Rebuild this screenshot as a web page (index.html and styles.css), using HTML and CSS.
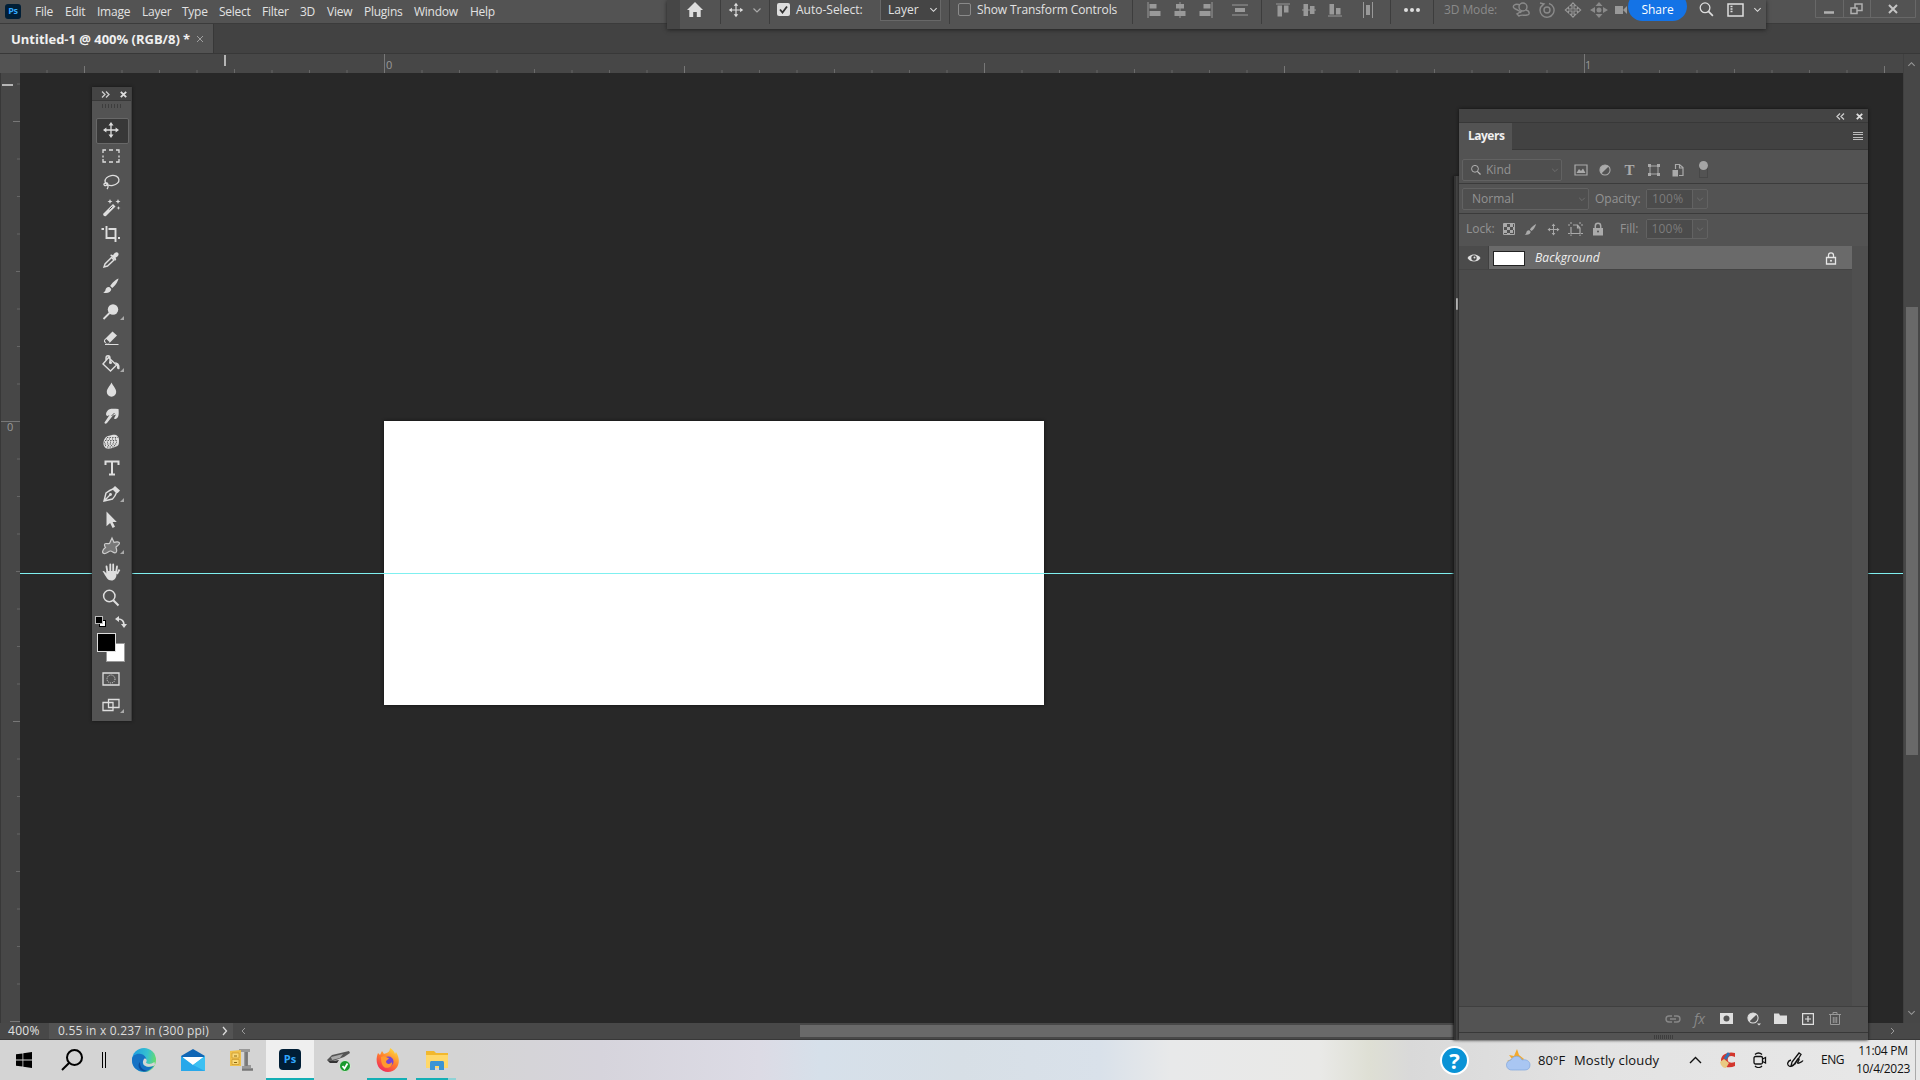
FILE: index.html
```html
<!DOCTYPE html>
<html lang="en">
<head>
    <meta charset="UTF-8">
    <title>Untitled-1 @ 400% (RGB/8)</title>
    <link rel="stylesheet" href="styles.css">
</head>
<body>
    <!-- shared icons -->
    <svg class="defs">
        <symbol id="move" viewBox="0 0 20 20"><path d="M10 4v12M4 10h12" stroke="currentColor" stroke-width="1.3"/><path d="M10 2l2.5 3.4h-5zM10 18l2.5-3.4h-5zM2 10l3.4-2.5v5zM18 10l-3.4-2.5v5z" fill="currentColor"/></symbol>
        <symbol id="brush" viewBox="0 0 20 20"><path d="M17.5 2.5c-3 1-7 5-8.3 7.5l2 2c2.500-1.600 5.500-5.800 6.300-9.500zM8.300 11c-2.500-.3-3.600 1.500-3.900 3.200-.2 1.200-.9 1.700-2.200 2.300 3.300 1.300 7.800.3 8.100-3.500z" fill="currentColor"/></symbol>
        <symbol id="chev" viewBox="0 0 10 10"><path d="M1.500 3.500L5 7l3.500-3.500" fill="none" stroke="currentColor" stroke-width="1.200"/></symbol>
        <symbol id="circle-half" viewBox="0 0 16 16"><circle cx="8" cy="8" r="5.800" fill="none" stroke="currentColor" stroke-width="1.200"/><path d="M12.100 3.900A5.800 5.800 0 0 0 3.900 12.100z" fill="currentColor"/></symbol>
        <symbol id="glass" viewBox="0 0 20 20"><circle cx="8.300" cy="8" r="5.700" fill="none" stroke="currentColor" stroke-width="1.500"/><path d="M12.300 12.300L17.500 17.500" stroke="currentColor" stroke-width="2"/></symbol>
        <symbol id="x" viewBox="0 0 10 10"><path d="M2 2l6 6M8 2L2 8" stroke="currentColor" stroke-width="2"/></symbol>
    </svg>

    <div class="menubar">
        <span class="ps-logo">Ps</span>
        <span>File</span><span>Edit</span><span>Image</span><span>Layer</span><span>Type</span><span>Select</span><span>Filter</span><span>3D</span><span>View</span><span>Plugins</span><span>Window</span><span>Help</span>
        <div class="win-controls">
            <svg width="101" height="18" viewBox="0 0 101 18"><path d="M.5 0v17.500h100V0M28.500 0v17M55.500 0v17" fill="none" stroke="#686868"/><path d="M9 12.500h10" stroke="#b0b0b0" stroke-width="2.500"/><path d="M36 8h6v5.500h-6zM40 8V4h7v6.500h-5" fill="none" stroke="#b0b0b0" stroke-width="1.500"/><path d="M74 5l8 8M82 5l-8 8" stroke="#c4c4c4" stroke-width="2"/></svg>
        </div>
    </div>

    <div class="tabbar">
        <div class="tab"><b>Untitled-1 @ 400% (RGB/8) *</b><svg width="8" height="8" viewBox="0 0 8 8"><path d="M1 1l6 6M7 1L1 7" stroke="#a0a0a0"/></svg></div>
    </div>

    <div class="work">
        <div class="corner"></div>
        <div class="ruler-h"><span class="n0">0</span><span class="n1">1</span><i class="mark-h"></i></div>
        <div class="ruler-v"><span>0</span><i class="mark-v"></i></div>
        <div class="stage">
            <div class="doc"></div>
            <div class="guide"></div>
        </div>
        <div class="vscroll">
            <svg class="up" width="9" height="9"><use href="#chev"/></svg>
            <div class="vthumb"></div>
            <svg width="9" height="9"><use href="#chev"/></svg>
        </div>
    </div>

    <div class="statusbar">
        <span class="zoom">400%</span>
        <span class="docsize">0.55 in x 0.237 in (300 ppi)<svg width="6" height="10" viewBox="0 0 6 10"><path d="M1 1l3.500 4L1 9" fill="none" stroke="#ddd" stroke-width="1.300"/></svg></span>
        <svg class="left" width="6" height="8" viewBox="0 0 6 8"><path d="M5 1L2 4l3 3" fill="none" stroke="#999"/></svg>
        <div class="hthumb"></div>
        <svg class="right" width="6" height="8" viewBox="0 0 6 8"><path d="M1 1l3 3-3 3" fill="none" stroke="#999"/></svg>
    </div>

    <!-- floating options bar -->
    <div class="options">
        <div class="grip"></div>
        <div class="cell home"><svg width="18" height="18" viewBox="0 0 18 18"><path d="M9 1l8 8h-2.300v7H10.800v-5H7.200v5H3.300V9H1z" fill="#dedede"/></svg></div>
        <div class="cell tool"><svg width="18" height="18"><use href="#move"/></svg><svg class="dim" width="10" height="10"><use href="#chev"/></svg></div>
        <div class="cell auto">
            <svg width="13" height="13" viewBox="0 0 13 13"><rect width="13" height="13" rx="2" fill="#dedede"/><path d="M3 6.500l2.500 3L10 3.500" fill="none" stroke="#333" stroke-width="1.800"/></svg>
            <span class="t-auto">Auto-Select:</span>
            <span class="select">Layer<svg width="9" height="9"><use href="#chev"/></svg></span>
        </div>
        <div class="cell show"><i class="box"></i><span>Show Transform Controls</span></div>
        <div class="cell aligns">
            <svg width="14" height="16" viewBox="0 0 14 16"><path d="M1 0v16" stroke="#999"/><path d="M2.500 2h7v4.500h-7zM2.500 9h11v5h-11z" fill="#999"/></svg>
            <svg width="14" height="16" viewBox="0 0 14 16"><path d="M7 0v16" stroke="#999"/><path d="M3 2h8v4.500H3zM1.500 9h11v5h-11z" fill="#999"/></svg>
            <svg width="14" height="16" viewBox="0 0 14 16"><path d="M13 0v16" stroke="#999"/><path d="M4.500 2h7v4.500h-7zM.5 9h11v5H.5z" fill="#999"/></svg>
            <svg class="dist" width="16" height="12" viewBox="0 0 16 12"><path d="M0 1h16M0 11h16" stroke="#999"/><path d="M3 4h10v4H3z" fill="#999"/></svg>
        </div>
        <div class="cell aligns b">
            <svg width="14" height="14" viewBox="0 0 14 14"><path d="M0 1h14" stroke="#999"/><path d="M1.500 2.500h4.500v11H1.500zM8 2.500h4.500v7H8z" fill="#999"/></svg>
            <svg width="14" height="14" viewBox="0 0 14 14"><path d="M0 7h14" stroke="#999"/><path d="M1.500 1h4.500v12H1.500zM8 3h4.500v8H8z" fill="#999"/></svg>
            <svg width="14" height="14" viewBox="0 0 14 14"><path d="M0 13h14" stroke="#999"/><path d="M1.500 1h4.500v10.500H1.500zM8 5h4.500v6.500H8z" fill="#999"/></svg>
            <svg class="dist" width="10" height="16" viewBox="0 0 10 16"><path d="M.5 0v16M9.500 0v16" stroke="#999"/><path d="M3 3h4v10H3z" fill="#999"/></svg>
        </div>
        <div class="cell dots"><svg width="18" height="6" viewBox="0 0 18 6"><g fill="#dedede"><circle cx="3" cy="3" r="2"/><circle cx="9" cy="3" r="2"/><circle cx="15" cy="3" r="2"/></g></svg></div>
        <div class="cell mode">
            <span>3D Mode:</span>
            <svg width="18" height="16" viewBox="0 0 18 16" fill="none" stroke="#8a8a8a" stroke-width="1.400"><circle cx="11" cy="5" r="4"/><path d="M8 3C3 1 0 4 2 6s6 2 7 5M14 8c4 1 4 5 1 5-3 1-5-1-8 1l-2-2 5-3"/></svg>
            <svg width="18" height="16" viewBox="0 0 18 16" fill="none" stroke="#8a8a8a" stroke-width="1.400"><circle cx="9" cy="8" r="3"/><path d="M5 2.500A7 7 0 1 0 11 1.500M2 1l4 1-3 3"/></svg>
            <svg width="18" height="16" viewBox="0 0 18 16" fill="none" stroke="#999" stroke-width="1.100"><path d="M9 .8l2.800 3H10V7h3.500V5.200L16.700 8l-3.200 2.800V9H10v3.200h1.800l-2.800 3-2.800-3H8V9H4.500v1.800L1.300 8l3.200-2.800V7H8V3.800H6.200z"/></svg>
            <svg width="18" height="16" viewBox="0 0 18 16" fill="#8a8a8a"><circle cx="9" cy="8" r="2.500"/><path d="M9 0l3.500 4h-7zM9 16l3.500-4h-7zM0 8l5-3v6zM18 8l-5-3v6z"/></svg>
            <svg class="cam" width="12" height="10" viewBox="0 0 12 10" fill="#999"><path d="M0 1h8v8H0zM8 5l4-4v8z"/></svg>
        </div>
        <div class="share">Share</div>
        <svg class="o-search" width="17" height="17"><use href="#glass"/></svg>
        <svg class="o-ws" width="17" height="14" viewBox="0 0 17 14"><path d="M1 1h15v12H1z" fill="none" stroke="#dedede" stroke-width="1.500"/><path d="M3.500 3.500h2M3.500 6h2M3.500 8.500h2" stroke="#dedede" stroke-width="1.500"/></svg>
        <svg class="o-chev" width="9" height="9"><use href="#chev"/></svg>
    </div>

    <!-- floating tools panel -->
    <div class="tools">
        <div class="tools-head"><svg width="9" height="7" viewBox="0 0 9 7"><path d="M1 .5l3 3-3 3M5 .5l3 3-3 3" fill="none" stroke="#ccc" stroke-width="1.300"/></svg><svg width="9" height="9"><use href="#x"/></svg></div>
        <div class="tools-grip"></div>
        <div class="tool-item active"><svg><use href="#move"/></svg></div>
        <div class="tool-item"><svg viewBox="0 0 20 20"><path d="M2 7V4h3M8 4h4M15 4h3v3M18 9.500v2M18 13v3h-3M12 16H8M5 16H2v-3M2 11.500v-2" fill="none" stroke="#dedede" stroke-width="1.300"/></svg></div>
        <div class="tool-item"><svg viewBox="0 0 20 20" fill="none" stroke="#dedede" stroke-width="1.300"><ellipse cx="11" cy="8.500" rx="7" ry="5" transform="rotate(-10 11 8.500)"/><path d="M5 11c-3 0-2.500 3 0 2.500S7 10.500 5 11M6.500 13c1 1 .5 3-.5 4"/></svg></div>
        <div class="tool-item"><svg viewBox="0 0 20 20" fill="#dedede"><path d="M2.500 15.500L12 6l2.500 2.500-9.500 9.500c-1.500 1-3.800-1-2.500-2.500z"/><path d="M11.500 8.500l-3 3" stroke="#535353"/><path d="M9 1l.7 1.800 1.800.7-1.800.7L9 6l-.7-1.800-1.800-.7 1.800-.7zM17 1l.7 1.800 1.800.7-1.800.7L17 6l-.7-1.800-1.800-.7 1.800-.7zM17.500 8l.5 1.500 1.500.5-1.500.5-.5 1.500-.5-1.500-1.500-.5 1.500-.5z"/></svg></div>
        <div class="tool-item"><svg viewBox="0 0 20 20" fill="none" stroke="#dedede" stroke-width="1.900"><path d="M5.500 2v12h9.500M7.500 5h7v13M.5 5h2.500M17 14h2"/></svg></div>
        <div class="tool-item"><svg viewBox="0 0 20 20"><path d="M3 17l1-3 6.500-6.500 2.500 2.500L6.500 16z" fill="none" stroke="#dedede" stroke-width="1.400"/><path d="M9 5l1.500-.5 1.500.8c1.500-2.500 3.500-4 5-2.500s0 3.500-2.500 5l.8 1.500-1 1.500z" fill="#dedede"/></svg></div>
        <div class="tool-item"><svg><use href="#brush"/></svg></div>
        <div class="tool-item more"><svg viewBox="0 0 20 20"><circle cx="12" cy="7.500" r="5.200" fill="#dedede"/><path d="M8.500 11L2.500 17" stroke="#dedede" stroke-width="1.800"/></svg></div>
        <div class="tool-item"><svg viewBox="0 0 20 20"><path d="M3 12L11.500 3.500l4.500 4-8.500 8.500H5.500L3 14z" fill="#dedede"/><path d="M3.800 12.500l1.500-1.500 3.500 3.200-1.500 1.500H5.500z" fill="#535353"/><path d="M4 16.500h13.500" stroke="#dedede"/></svg></div>
        <div class="tool-item more"><svg viewBox="0 0 20 20"><path d="M7.500 3.500l8 7.500-6 6L2 10zM9 9V4c0-3-4-3-4 0v2" fill="none" stroke="#dedede" stroke-width="1.400"/><circle cx="9.500" cy="8.500" r="1.500" fill="#dedede"/><path d="M14 8c4 1 5 3 4.500 7-2 1-3-1-2.500-3z" fill="#dedede"/></svg></div>
        <div class="tool-item"><svg viewBox="0 0 20 20"><path d="M10.500 2.500c1.500 3.500 4.700 6 4.700 9.500a4.700 4.700 0 0 1-9.400 0c0-3.500 3.200-6 4.700-9.500z" fill="#dedede"/></svg></div>
        <div class="tool-item"><svg viewBox="0 0 20 20"><path d="M6 5.500C8 2 12 3 17.500 3c.5 5 .5 9-3 10-2 .5-1.500-1-.5-2.500l1-2-3 1L6 17c-1 1-2.800 1-2.500-.5L8.500 9 6.500 10c-2-.5-1.700-3-.5-4.500z" fill="#dedede"/><path d="M10.500 10l3-3" stroke="#535353"/></svg></div>
        <div class="tool-item"><svg viewBox="0 0 20 20"><path d="M3 8c2-5 6-4 8-5 4-1 7 1 7 5s0 6-4 7c-5 2-9 3-11-1-1-2-.5-4 0-6z" fill="#dedede"/><path d="M4 8.500h13M3.500 12h13M6 5.500h11M6 15h8" stroke="#585858" stroke-width="1.200" stroke-dasharray="1.300 1.300"/><path d="M5 7h12M3 10.200h14M4 13.600h11" stroke="#585858" stroke-width="1" stroke-dasharray="1 2"/></svg></div>
        <div class="tool-item"><svg viewBox="0 0 20 20"><path d="M4.500 7V3.500h13V7M11 3.500v13M8 16.500h6" fill="none" stroke="#dedede" stroke-width="2"/></svg></div>
        <div class="tool-item more"><svg viewBox="0 0 20 20"><path d="M3 17l2-8c2-1.500 4-3 7-4l3.500 3.500c-1 3-2.500 5-4 6.500zM3 17l6-6" fill="none" stroke="#dedede" stroke-width="1.400"/><circle cx="9.500" cy="10.500" r="1.400" fill="#dedede"/><path d="M11.500 4.500L14 2l5 4.500-2.500 2.700z" fill="#dedede"/></svg></div>
        <div class="tool-item"><svg viewBox="0 0 20 20"><path d="M5.500 1.500v14.800l3.600-3.400 2.500 5 2.400-1.200-2.400-4.800h4.200z" fill="#dedede"/></svg></div>
        <div class="tool-item more"><svg viewBox="0 0 20 20"><path d="M11 2l2 4.500c2-1 5-1 5.500.5s-2 2.500-3.500 4c0 2 2 4 0 5.500s-3.500-1.500-5.500-1.500-4 3-6.500 2.500-1.500-4 1.500-6c-1.500-2-1.500-4 .5-4s2 .5 3.500 0z" fill="#777" stroke="#ccc" stroke-width="1.200"/></svg></div>
        <div class="tool-item"><svg viewBox="0 0 20 20"><path d="M6.500 11L5.500 4.500M9.300 10V2.500M12.200 10V2.500M15 11l1-6.500" stroke="#dedede" stroke-width="1.800" stroke-linecap="round"/><path d="M1.500 9c1.500-.5 3 1 4 2.500V9h10v3c0 4-2 6.500-5 6.500-4 0-5-3-9-9.500z" fill="#dedede"/><path d="M16 12l2.500-4.500" stroke="#dedede" stroke-width="1.800"/></svg></div>
        <div class="tool-item"><svg><use href="#glass"/></svg></div>
        <div class="swatch-minis">
            <svg width="12" height="12" viewBox="0 0 12 12"><rect x="4.500" y="4.500" width="6" height="6" fill="#fff" stroke="#000"/><rect x=".5" y=".5" width="7" height="7" fill="#000" stroke="#bbb"/></svg>
            <svg width="12" height="12" viewBox="0 0 12 12"><path d="M3 3c4 0 6 1.500 6 6" fill="none" stroke="#dedede" stroke-width="1.700"/><path d="M0 3l4-3v6zM9 12l-3-4h6z" fill="#dedede"/></svg>
        </div>
        <div class="swatches"><i class="bg"></i><i class="fg"></i></div>
        <div class="tool-item mask"><svg viewBox="0 0 20 20" fill="none" stroke="#dedede"><path d="M2 4h16v12H2z" stroke-width="1.300"/><circle cx="10" cy="10" r="4" stroke-dasharray="1 1"/></svg></div>
        <div class="tool-item more"><svg viewBox="0 0 20 20" fill="#535353" stroke="#dedede" stroke-width="1.300"><path d="M2 7.500h10v8H2zM7.500 4.500H18v8H7.500z"/></svg></div>
    </div>

    <!-- collapsed panel peeking out from behind the layers panel -->
    <div class="behind"></div>

    <div class="layers">
        <div class="l-head"><svg width="9" height="7" viewBox="0 0 9 7"><path d="M4 .5l-3 3 3 3M8 .5l-3 3 3 3" fill="none" stroke="#ccc" stroke-width="1.300"/></svg><svg width="9" height="9"><use href="#x"/></svg></div>
        <div class="l-tabs"><b>Layers</b><i class="burger"></i></div>
        <div class="l-row filter">
            <div class="field kind"><svg width="12" height="12"><use href="#glass"/></svg><span>Kind</span><svg class="c" width="8" height="8"><use href="#chev"/></svg></div>
            <svg width="14" height="12" viewBox="0 0 14 12"><path d="M1 1h12v10H1z" fill="none" stroke="#aaa" stroke-width="1.200"/><path d="M2.500 9l2.500-4 2 2 2-2.500L11.500 9z" fill="#aaa"/></svg>
            <svg width="14" height="14"><use href="#circle-half"/></svg>
            <span class="serif">T</span>
            <svg width="14" height="14" viewBox="0 0 14 14"><path d="M3 3h8v8H3z" fill="none" stroke="#aaa"/><path d="M1 1h3v3H1zM10 1h3v3h-3zM1 10h3v3H1zM10 10h3v3h-3z" fill="#aaa"/></svg>
            <svg width="14" height="14" viewBox="0 0 14 14"><path d="M4.500 6V1.500h4l3.500 3v8H8M8.500 1.500v3.500H12" fill="none" stroke="#aaa" stroke-width="1.200"/><path d="M1.500 7H7v6.500H1.500z" fill="#aaa"/></svg>
            <i class="toggle"></i>
        </div>
        <div class="l-row blend">
            <div class="field mode-sel"><span>Normal</span><svg class="c" width="8" height="8"><use href="#chev"/></svg></div>
            <span class="lbl">Opacity:</span>
            <div class="num"><span>100%</span><svg width="8" height="8"><use href="#chev"/></svg></div>
        </div>
        <div class="l-row locks">
            <span class="lbl lock-l">Lock:</span>
            <svg width="14" height="14" viewBox="0 0 14 14"><path d="M1.500 1.500h11v11h-11z" fill="none" stroke="#aaa"/><path d="M2 2h3v3H2zM8 2h3v3H8zM5 5h3v3H5zM11 5h2v3h-2zM2 8h3v3H2zM8 8h3v3H8zM5 11h3v2H5z" fill="#aaa"/></svg>
            <svg width="15" height="15"><use href="#brush"/></svg>
            <svg width="15" height="15"><use href="#move"/></svg>
            <svg width="15" height="14" viewBox="0 0 15 14"><path d="M3 5v6.500h9V6L9.500 3H5M9.500 3v3H12" fill="none" stroke="#aaa" stroke-width="1.200"/><path d="M3 0v2M0 3h2M12 0v2M13 3h2M3 12.500V14M0 11.500h2M12 12.500V14M13 11.500h2" stroke="#aaa"/></svg>
            <svg width="14" height="14" viewBox="0 0 14 14"><path d="M2 6h10v7.500H2z" fill="#aaa"/><path d="M4.300 7V4a2.700 2.700 0 0 1 5.400 0v3" fill="none" stroke="#aaa" stroke-width="1.500"/><circle cx="7" cy="9.500" r="1" fill="#535353"/></svg>
            <span class="lbl fill-l">Fill:</span>
            <div class="num"><span>100%</span><svg width="8" height="8"><use href="#chev"/></svg></div>
        </div>
        <div class="l-list">
            <div class="l-item">
                <div class="eye"><svg width="14" height="10" viewBox="0 0 14 10"><path d="M.5 5C3 .3 11 .3 13.500 5 11 9.700 3 9.700.5 5z" fill="#e0e0e0"/><circle cx="7" cy="5" r="2.700" fill="#4b4b4b"/><circle cx="7.500" cy="4.500" r="1" fill="#e0e0e0"/></svg></div>
                <div class="l-name"><i class="thumb"></i><em>Background</em><svg width="12" height="13" viewBox="0 0 12 13"><path d="M1.500 5.500h9V12h-9zM3.500 5.500V3.300a2.500 2.500 0 0 1 5 0v2.200" fill="none" stroke="#e6e6e6" stroke-width="1.300"/><circle cx="6" cy="8.800" r="1" fill="#e6e6e6"/></svg></div>
            </div>
        </div>
        <div class="l-foot">
            <svg width="16" height="10" viewBox="0 0 16 10"><path d="M7 2H4a3 3 0 0 0 0 6h3M9 2h3a3 3 0 0 1 0 6H9M5 5h6" fill="none" stroke="#888" stroke-width="1.400"/></svg>
            <em>fx</em>
            <svg width="13" height="11" viewBox="0 0 13 11"><path d="M0 0h13v11H0z" fill="#dedede"/><circle cx="6.500" cy="5.500" r="3" fill="#535353"/></svg>
            <svg width="17" height="15" viewBox="0 0 17 15"><use href="#circle-half" x="1" y="0" width="14" height="14"/><path d="M12 12.500h4l-2 2z" fill="#dedede"/></svg>
            <svg width="13" height="11" viewBox="0 0 13 11"><path d="M0 .5h5l1 2h7V11H0z" fill="#dedede"/></svg>
            <svg width="12" height="12" viewBox="0 0 12 12"><path d="M.6.6h10.800v10.800H.6zM6 3v6M3 6h6" fill="none" stroke="#dedede" stroke-width="1.200"/></svg>
            <svg width="12" height="13" viewBox="0 0 12 13"><path d="M0 2.500h12M4 2.500v-2h4v2M1.500 3v9.500h9V3M4.300 5v6M6 5v6M7.700 5v6" fill="none" stroke="#999"/></svg>
        </div>
        <div class="l-edge"></div>
    </div>

    <div class="taskbar">
        <div class="tb start"><svg width="16" height="16" viewBox="0 0 16 16"><path d="M0 2.300L6.500 1.400v6.200H0zM7.300 1.300L16 0v7.600H7.300zM0 8.400h6.500v6.200L0 13.700zM7.300 8.400H16V16l-8.700-1.300z"/></svg></div>
        <div class="tb find"><svg width="24" height="24" viewBox="0 0 24 24" fill="none" stroke="#000" stroke-width="2"><circle cx="14.500" cy="9.500" r="7.500"/><path d="M9.300 14.800L2 22"/></svg></div>
        <div class="tb bars"><svg width="6" height="16" viewBox="0 0 6 16"><path d="M1.500 0v16M4.500 0v16" stroke="#000"/></svg></div>
        <div class="tb"><svg width="24" height="24" viewBox="0 0 24 24"><defs><linearGradient id="e1" x1="0" y1=".3" x2="1" y2=".5"><stop offset="0" stop-color="#1f9de0"/><stop offset=".6" stop-color="#35c1d0"/><stop offset="1" stop-color="#68dd6a"/></linearGradient></defs><circle cx="12" cy="12" r="12" fill="url(#e1)"/><path d="M0 12c0-5 5-7 9-6 4 1 6 4 5 7-3-2-5 3-1 5 3 1.500 6 1 9-.5C16 27 0 25 0 12z" fill="#1672c4"/><path d="M8 14c-.5 5 3 9 9 8.800C9 26 4 18 8 14z" fill="#0c4d9a"/><path d="M12.500 10.500c2 0 3 2 1.500 4 1 2 5 2 8.500-.5L23 17c-3 2-11 3-12-2-.3-2 .5-3.500 1.500-4.500z" fill="#d5d5d5"/></svg></div>
        <div class="tb"><svg width="24" height="22" viewBox="0 0 24 22"><path d="M0 7L12 0l12 7v15H0z" fill="#1066b5"/><path d="M2 8h20v10H2z" fill="#fff"/><path d="M0 7l12 9L24 7v15H0z" fill="#28a8ea"/><path d="M12 16l12-9v15z" fill="#3cc0f2"/></svg></div>
        <div class="tb"><svg width="24" height="24" viewBox="0 0 24 24"><path d="M9 1h11v3h-2v13h3v3h-9v-2h2V4H9z" fill="#999"/><path d="M0 3l11-1v16H0z" fill="#efc14c"/><path d="M2 5h7v5H2zM2 11.500h7v5H2z" fill="#f9d978" stroke="#c9962c" stroke-width=".7"/><path d="M4 8h3M4 14.500h3" stroke="#8b6914"/><path d="M16.500 4v14M12 21.500h11" stroke="#777" stroke-width="2.500"/></svg></div>
        <div class="tb current"><span class="ps-big">Ps</span></div>
        <div class="tb"><svg width="24" height="24" viewBox="0 0 24 24"><path d="M0 12l5-5 17-4 1 2-6 4-11 4z" fill="#555"/><path d="M4 9l12-3-3 4-8 2z" fill="#aaa"/><path d="M0 12l6 1 6-1-2 3H3z" fill="#333"/><circle cx="18" cy="18" r="5.500" fill="#199a2c" stroke="#d9ead9"/><path d="M15.500 18l2 2.500 3-5" fill="none" stroke="#fff" stroke-width="1.800"/></svg></div>
        <div class="tb open"><svg width="24" height="24" viewBox="0 0 24 24"><defs><linearGradient id="f1" x1=".8" y1="0" x2=".2" y2="1"><stop offset="0" stop-color="#ffe23d"/><stop offset=".5" stop-color="#ff7b2d"/><stop offset="1" stop-color="#ef2260"/></linearGradient></defs><path d="M14 0c3 2 4 3 5 6l1-2c6 9 2 20-8 20C3 24-2 15 2 5l2 2 2-4 2 3c3-1 6-2 6-6z" fill="url(#f1)"/><circle cx="12.500" cy="13.500" r="5" fill="#7544d3"/><path d="M5 9c4-2 5 1 8 1-1 2-3 2-3 4 1 3 5 2 6 0 1 5-6 8-9 4-2-3-2-6-2-9z" fill="#ff9a2e"/></svg></div>
        <div class="tb explorer"><svg width="22" height="20" viewBox="0 0 22 20"><path d="M0 1h8l2 2h12v15H0z" fill="#f2b82d"/><path d="M0 5h22v13H0z" fill="#ffd869"/><path d="M4 20v-7c0-2 1-2 2-2h10c1 0 2 0 2 2v7h-5v-4H9v4z" fill="#3b94d4"/></svg></div>
        <div class="tray">
            <div class="help">?</div>
            <svg class="weather" width="25" height="24" viewBox="0 0 25 24"><path d="M11 1l2 6 5 4-6 8-11-6 5-2-3-4 5 1z" fill="#f3a92b"/><path d="M6 22a5 5 0 0 1-1-10c2-5 9-5 11 0 4-1 8 1 8 5 0 3-2 5-5 5z" fill="#a9c6f2" stroke="#7fa6de" stroke-width=".7"/></svg>
            <span class="temp">80°F</span><span class="sky">Mostly cloudy</span>
            <svg class="caret" width="13" height="8" viewBox="0 0 13 8"><path d="M1 7l5.500-5.500L12 7" fill="none" stroke="#111" stroke-width="1.400"/></svg>
            <svg class="cc" width="16" height="16" viewBox="0 0 16 16"><path d="M15 1v4c-6-3-8 1-7 4 1 2 4 2 7 1v4C9 17 1 15 1 8 1 2 9-1 15 1z" fill="#d3362d"/><path d="M9 1L5 7" stroke="#2d73b8" stroke-width="3"/><path d="M0 10l4-3 5 4-3 5c-3 0-5-2-6-6z" fill="#e9c982"/></svg>
            <svg class="meet" width="14" height="16" viewBox="0 0 14 16" fill="none" stroke="#111" stroke-width="1.300"><rect x="1" y="4.500" width="8.500" height="7.500" rx="1.500"/><path d="M9.500 7l3-1.500v5.500l-3-1.500M2 2.500C4 .5 7 .5 9 2.500M2 14c2 2 5 2 7 0"/></svg>
            <svg class="pen" width="17" height="16" viewBox="0 0 17 16" fill="none" stroke="#111" stroke-width="1.300"><path d="M4 14l1-4 7-9 2 1.500-6 9.500zM4 8c-4 1-4 5-2 6 4 2 6-3 8-6s3-1 1 2 4 0 5-1.500"/></svg>
            <span class="lang">ENG</span>
            <div class="clock"><span>11:04 PM</span><span>10/4/2023</span></div>
        </div>
    </div>
</body>
</html>
```
FILE: styles.css
```css
* { box-sizing: border-box; }
body { margin: 0; width: 1920px; height: 1080px; overflow: hidden; background: #282828; color: #e2e2e2; font: 12px/16px "Open Sans", "Noto Sans", sans-serif; display: flex; flex-direction: column; position: relative; }
svg { display: block; flex: none; color: #dedede; }
.defs { position: absolute; width: 0; height: 0; }

/* menu + tabs */
.menubar { height: 24px; flex: none; background: #535353; display: grid; grid-template-columns: 30px 30px 32px 45px 40px 37px 43px 38px 27px 37px 50px 56px 40px 1fr; padding-left: 5px; align-items: center; letter-spacing: -.25px; border-bottom: 1px solid #3b3b3b; }
.ps-logo { width: 16px; height: 15px; background: #001e36; color: #31a8ff; border-radius: 3px; font-size: 9px; line-height: 14px; font-weight: 700; text-align: center; }
.win-controls { justify-self: end; align-self: start; margin-right: 4px; }
.tabbar { height: 30px; flex: none; background: #424242; border-bottom: 1px solid #383838; }
.tab { width: 214px; height: 29px; background: #535353; border-right: 1px solid #383838; padding-left: 11px; display: flex; align-items: center; gap: 7px; }
.tab b { color: #f0f0f0; font-size: 13px; letter-spacing: -.02px; width: 178px; white-space: nowrap; }

/* work area */
.work { height: 969px; flex: none; display: grid; grid-template-columns: 20px 1883px 17px; grid-template-rows: 19px 950px; }
.corner { background: #535353; }
.ruler-h, .ruler-v { position: relative; background-color: #474747; color: #999; font-size: 11px; line-height: 12px; background-repeat: repeat-x; }
.ruler-h { background-image: linear-gradient(90deg, #777 1px, transparent 1px), linear-gradient(90deg, #777 1px, transparent 1px), linear-gradient(90deg, #777 1px, transparent 1px), linear-gradient(90deg, #6a6a6a 1px, transparent 1px), linear-gradient(90deg, #666 1px, transparent 1px); background-size: 1200px 19px, 600px 10px, 300px 7px, 150px 4px, 37.5px 3px; background-position: 364px 100%; }
.ruler-v { background-repeat: repeat-y; background-image: linear-gradient(#777 1px, transparent 1px), linear-gradient(#777 1px, transparent 1px), linear-gradient(#777 1px, transparent 1px), linear-gradient(#6a6a6a 1px, transparent 1px), linear-gradient(#666 1px, transparent 1px); background-size: 19px 1200px, 10px 600px, 7px 300px, 4px 150px, 3px 37.5px; background-position: 100% 348px; border-left: 1px solid #383838; }
.ruler-h span { position: absolute; top: 5px; }
.ruler-h .n0 { left: 366px; }
.ruler-h .n1 { left: 1565px; }
.ruler-v span { position: absolute; left: 6px; top: 348px; }
.mark-h { position: absolute; left: 204px; top: 1px; width: 2px; height: 11px; background: #b5b5b5; }
.mark-v { position: absolute; left: 1px; top: 11px; width: 11px; height: 2px; background: #b5b5b5; }
.stage { position: relative; background: #282828; }
.doc { position: absolute; left: 364px; top: 348px; width: 660px; height: 284px; background: #fff; box-shadow: 0 0 3px #111; }
.guide { position: absolute; left: 0; right: 0; top: 500px; height: 1px; background: #7ff0f0; }
.vscroll { grid-column: 3; grid-row: 1 / 3; background: #474747; display: flex; flex-direction: column; align-items: center; justify-content: space-between; padding: 6px 1px 6px 0; border-left: 1px solid #404040; }
.vscroll svg { color: #999; }
.up { transform: rotate(180deg); }
.vthumb { width: 12px; height: 448px; background: #696969; margin-bottom: 15px; }

.statusbar { height: 17px; flex: none; background: #484848; display: flex; align-items: center; border-bottom: 1px solid #383838; }
.zoom { width: 49px; padding-left: 8px; letter-spacing: .3px; }
.docsize { width: 184px; height: 16px; background: #535353; padding-left: 9px; color: #ddd; letter-spacing: .2px; display: flex; align-items: center; justify-content: space-between; padding-right: 5px; white-space: nowrap; }
.left { margin-left: 7px; }
.hthumb { width: 665px; height: 12px; margin-left: 554px; background: #696969; }
.right { margin-left: auto; margin-right: 24px; }

/* options bar */
.options { position: absolute; left: 667px; top: 0; width: 1099px; height: 29px; background: #535353; display: flex; box-shadow: 0 1px 4px #222; }
.grip { width: 13px; background: #464646; }
.cell { height: 24px; padding-bottom: 5px; display: flex; align-items: center; border-right: 1px solid #3d3d3d; white-space: nowrap; }
.home { width: 41px; padding-left: 6px; }
.tool { width: 49px; padding-left: 6px; gap: 7px; }
.dim { color: #aaa; }
.auto { width: 180px; padding-left: 7px; }
.t-auto { margin-left: 6px; width: 84px; }
.select { width: 61px; height: 22px; background: #454545; border: 1px solid #686868; padding: 0 2px 0 7px; display: flex; justify-content: space-between; align-items: center; }
.show { width: 183px; padding-left: 8px; gap: 6px; letter-spacing: -.1px; }
.box { width: 13px; height: 13px; border: 1px solid #8a8a8a; border-radius: 2px; }
.aligns { width: 129px; padding-left: 14px; gap: 12px; }
.aligns .dist { margin-left: 7px; }
.aligns.b { padding-left: 14px; }
.aligns.b .dist { margin-left: 9px; }
.dots { width: 43px; padding-left: 12px; }
.mode { width: 194px; padding-left: 10px; color: #8a8a8a; border: 0; gap: 8px; letter-spacing: -.1px; }
.mode span { width: 60px; }
.cam { margin-left: -1px; }
.share { width: 59px; height: 29px; margin-top: -8px; background: #1473e6; color: #fff; border-radius: 15px; text-align: center; padding-top: 10px; }
.o-search { margin: 1px 0 0 11px; }
.o-ws { margin: 3px 0 0 12px; }
.o-chev { margin: 5px 0 0 9px; }

/* tools panel */
.tools { position: absolute; left: 92px; top: 87px; width: 40px; height: 634px; background: #535353; box-shadow: 0 0 3px #151515; border-right: 1px solid #404040; }
.tools-head { height: 14px; background: #444; border-bottom: 1px solid #383838; display: flex; align-items: center; padding: 2px 0 0 9px; gap: 9px; }
.tools-grip { height: 4px; width: 20px; margin: 3px 0 9px 10px; background: repeating-linear-gradient(90deg, #3d3d3d 0 1px, transparent 1px 3px); }
.tool-item { height: 26px; width: 38px; display: flex; align-items: center; justify-content: center; position: relative; }
.tool-item svg { width: 20px; height: 20px; }
.active::before { content: ""; position: absolute; left: 4px; top: 1px; width: 31px; height: 24px; background: #383838; border: 1px solid #686868; border-radius: 2px; }
.active svg { position: relative; }
.more::after { content: ""; position: absolute; right: 6px; bottom: 5px; border: 2px solid transparent; border-right-color: #aaa; border-bottom-color: #aaa; }
.swatch-minis { height: 21px; display: flex; align-items: center; gap: 8px; padding: 1px 0 0 3px; }
.swatches { position: relative; height: 34px; }
.swatches i { position: absolute; width: 19px; height: 19px; }
.fg { left: 5px; top: 1px; background: #000; border: 1px solid #ddd; }
.bg { left: 14px; top: 11px; background: #fff; border: 1px solid #999; }

/* layers panel */
.behind { position: absolute; left: 1454px; top: 176px; width: 6px; height: 864px; background: #464646; border-left: 2px solid #333; box-shadow: -1px 0 3px #151515; }
.behind::after { content: ""; position: absolute; left: 0; top: 122px; width: 2px; height: 12px; background: #bbb; border-radius: 2px; }
.layers { position: absolute; left: 1459px; top: 109px; width: 409px; height: 931px; background: #535353; display: flex; flex-direction: column; box-shadow: 0 0 3px #111; color: #939393; }
.l-head { height: 13px; background: #444; display: flex; justify-content: flex-end; align-items: center; gap: 10px; padding: 1px 4px 0 0; }
.l-tabs { height: 28px; background: #424242; border-top: 1px solid #383838; border-bottom: 1px solid #383838; display: flex; justify-content: space-between; align-items: center; }
.l-tabs b { width: 53px; height: 27px; background: #535353; color: #f0f0f0; line-height: 26px; padding-left: 9px; letter-spacing: -.5px; }
.burger { width: 10px; height: 8px; margin-right: 5px; background: repeating-linear-gradient(#bbb 0 1px, transparent 1px 2.330px); }
.l-row { display: flex; align-items: center; border-bottom: 1px solid #3b3b3b; padding-left: 3px; }
.l-row > svg { color: #aaa; }
.filter { height: 34px; padding-top: 6px; gap: 10.200px; }
.field { border: 1px solid #626262; background: #4f4f4f; height: 22px; display: flex; align-items: center; border-radius: 2px; }
.field .c, .num svg { color: #6f6f6f; }
.field .c { margin-left: auto; margin-right: 2px; }
.kind { width: 100px; padding-left: 7px; gap: 4px; margin-right: 2px; }
.kind svg { color: #bbb; }
.serif { font: bold 15px/16px "Liberation Serif", serif; color: #aaa; width: 14px; text-align: center; }
.toggle { width: 9px; height: 16px; border: 1px solid #484848; margin-left: 4px; position: relative; }
.toggle::before { content: ""; position: absolute; left: -1px; top: -2px; width: 9px; height: 9px; border-radius: 50%; background: #a5a5a5; }
.blend { height: 30px; }
.mode-sel { width: 127px; padding-left: 9px; }
.lbl { margin-left: 6px; width: 50px; }
.num { width: 62px; height: 20px; border: 1px solid #626262; border-radius: 2px; display: flex; align-items: center; color: #7c7c7c; gap: 8px; margin-left: 1px; }
.num span { width: 46px; height: 18px; line-height: 18px; padding-left: 5px; border-right: 1px solid #626262; background: #4b4b4b; letter-spacing: .2px; }
.num svg { margin-left: -5px; }
.locks { height: 32px; border: 0; gap: 7.500px; padding-bottom: 2px; }
.lock-l { width: 28px; margin: 0 0 0 4px; }
.fill-l { margin: 0 -4px 0 8px; width: 21px; }
.l-list { flex: 1; background: linear-gradient(90deg, #4b4b4b 393px, #4f4f4f 393px); }
.l-item { height: 24px; display: flex; width: 393px; border-bottom: 1px solid #444; }
.eye { width: 30px; padding-top: 1px; display: flex; align-items: center; justify-content: center; border-right: 1px solid #404040; }
.l-name { flex: 1; background: #6a6a6a; display: flex; align-items: center; color: #f0f0f0; padding-top: 1px; }
.thumb { width: 32px; height: 15px; background: #fff; border: 1px solid #222; margin-left: 4px; }
.l-name em { margin-left: 10px; letter-spacing: .1px; }
.l-name svg { margin-left: auto; margin-right: 15px; }
.l-foot { height: 27px; border-top: 1px solid #3f3f3f; border-bottom: 1px solid #383838; display: grid; grid-template-columns: repeat(7, 27px); justify-content: end; padding: 0 20px 2px 0; align-items: center; justify-items: center; }
.l-foot em { font-size: 14px; color: #888; }
.l-edge { height: 7px; background: repeating-linear-gradient(90deg, #3d3d3d 0 1px, transparent 1px 2px) 195px 2px / 20px 4px no-repeat; }

/* taskbar */
.taskbar { height: 40px; flex: none; display: flex; color: #111; background: linear-gradient(90deg, #d4d4d4 460px, #d6d4dc 600px, #dcdbe5 760px, #d6e0ea 820px, #d7dfe6 960px, #d9e1ea 1100px, #e8e9ea 1170px, #e9e9e7 1320px, #dedfd4 1370px, #d9d9d9 1410px, #e3e3e3 1600px, #e8e8e8); }
.tb { width: 49px; display: flex; align-items: center; justify-content: center; position: relative; }
.start, .find { width: 48px; }
.bars { width: 16px; }
.bars + .tb { margin-left: 7px; }
.current { width: 48px; background: #efefef; border-bottom: 2px solid #14afb5; }
.ps-big { width: 22px; height: 21px; background: #001e36; color: #31a8ff; border-radius: 4px; text-align: center; font-size: 11px; line-height: 20px; font-weight: 700; }
.open::after, .explorer::after { content: ""; position: absolute; left: 4px; bottom: 0; width: 40px; height: 2px; background: #14afb5; }
.explorer::after { width: 32px; box-shadow: 8px 0 #8fd3d6; }
.tray { margin-left: auto; display: flex; align-items: center; white-space: nowrap; }
.help { width: 29px; height: 29px; border-radius: 50%; border: 2px solid #fff; background: #0a93d6; color: #fff; font-size: 22px; line-height: 24px; font-weight: 700; text-align: center; }
.weather { margin-left: 37px; }
.temp { width: 36px; margin-left: 7px; font-size: 13px; }
.sky { width: 88px; font-size: 13px; letter-spacing: .15px; }
.caret { margin-left: 27px; }
.cc { margin-left: 18px; }
.meet { margin-left: 17px; }
.pen { margin-left: 20px; }
.lang { margin-left: 17px; width: 24px; letter-spacing: -.5px; }
.clock { margin-left: 8px; width: 63px; height: 40px; display: flex; flex-direction: column; align-items: center; gap: 2px; padding: 3px 2px 0 0; border-right: 1px solid #aaa; margin-right: 4px; letter-spacing: -.3px; }
```
